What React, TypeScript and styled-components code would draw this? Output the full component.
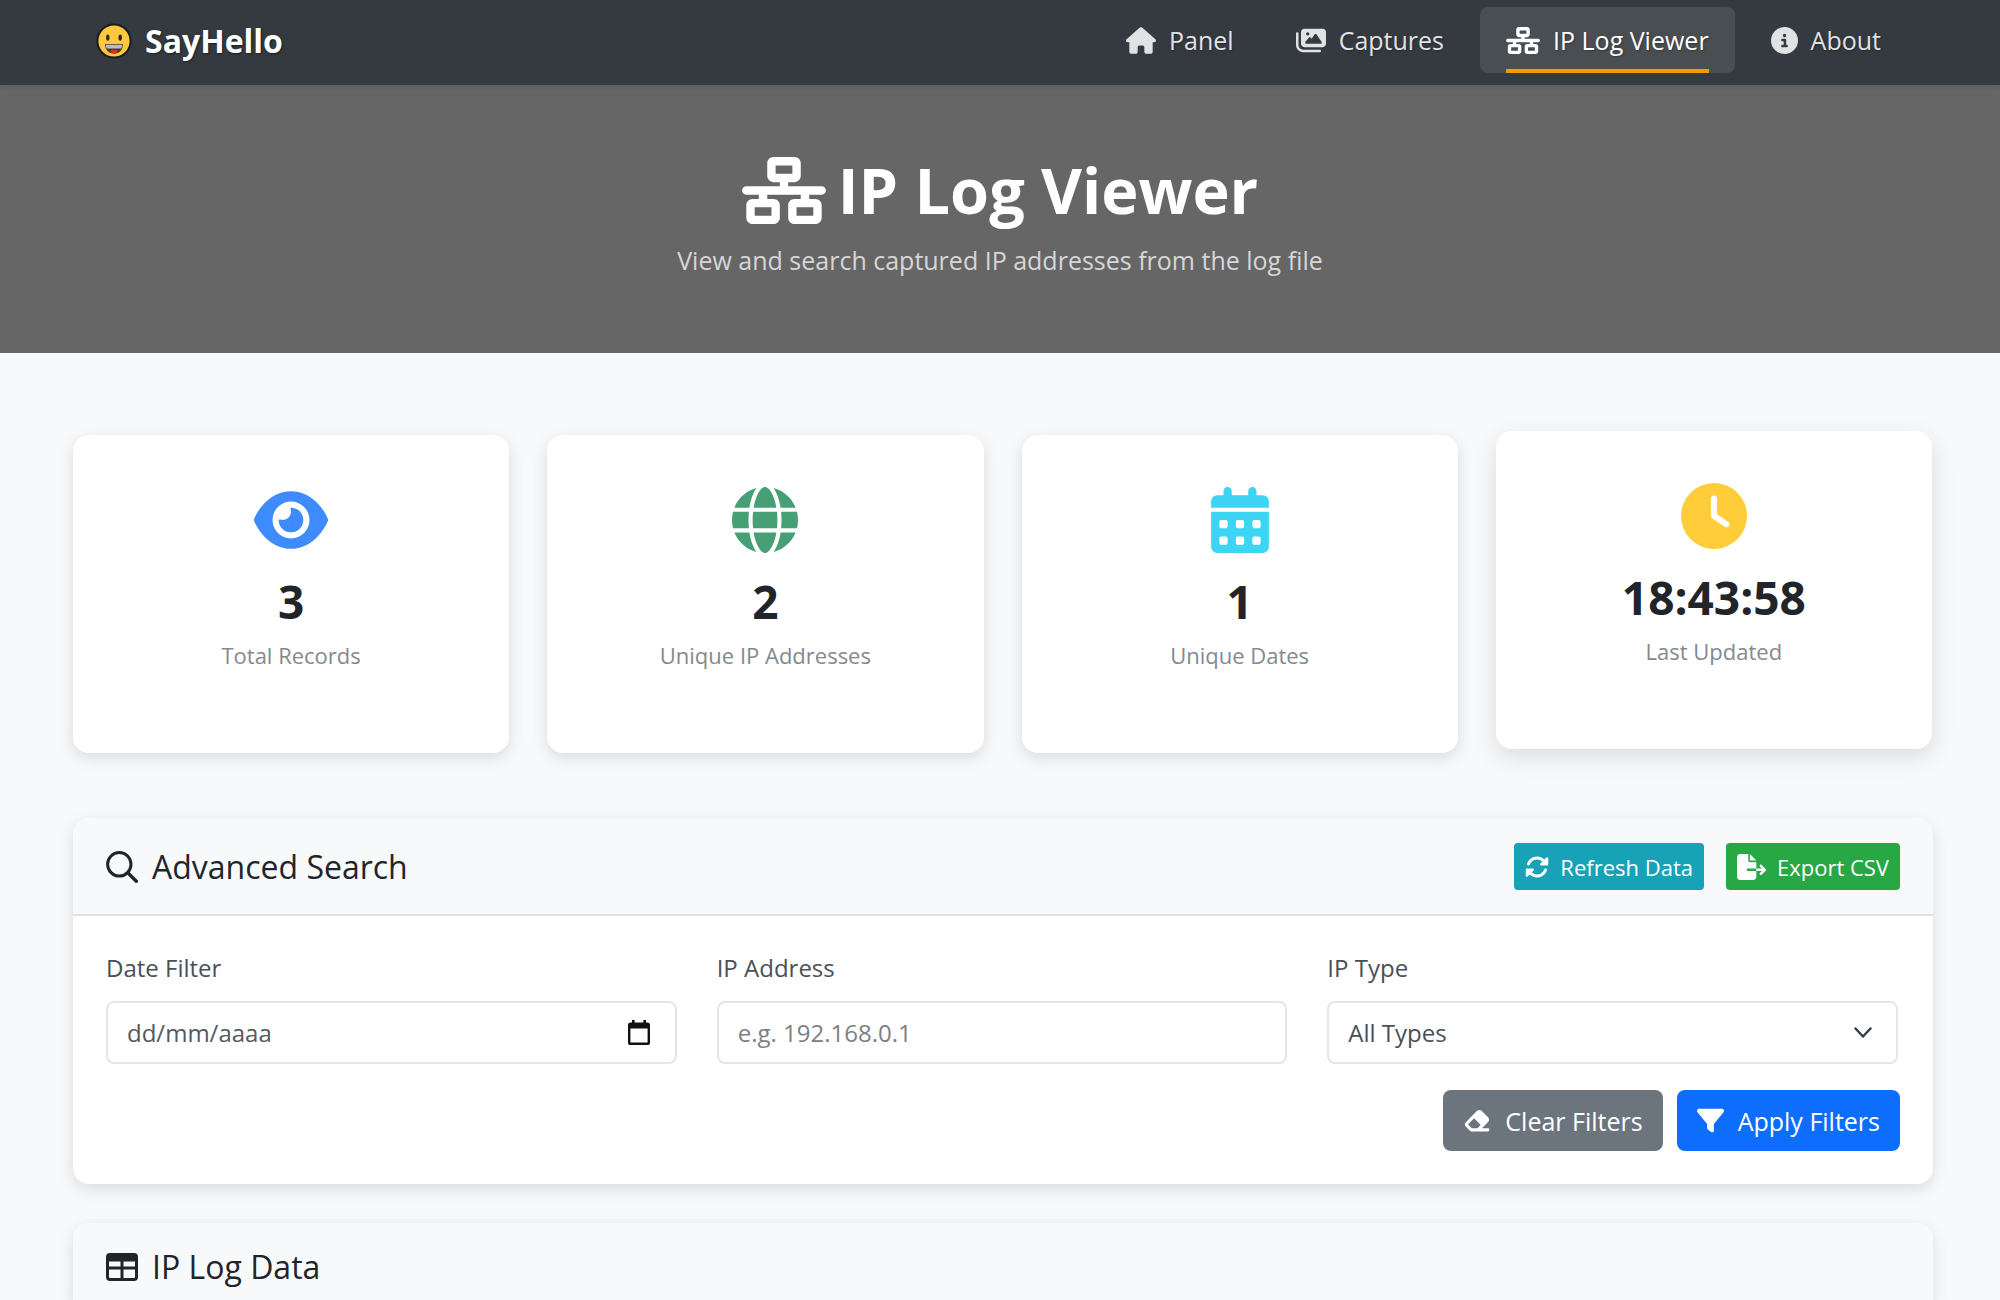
import React from "react";
import styled, { createGlobalStyle, css } from "styled-components";
import {
  FaHouse,
  FaImages,
  FaNetworkWired,
  FaCircleInfo,
  FaEye,
  FaGlobe,
  FaCalendarDays,
  FaClock,
  FaRotate,
  FaFileExport,
  FaEraser,
  FaFilter,
} from "react-icons/fa6";

const GlobalStyle = createGlobalStyle`
  *, *::before, *::after { box-sizing: border-box; }
  body {
    margin: 0;
    background: #f8f9fb;
    color: #212529;
    font-family: "Open Sans", "Noto Sans", sans-serif;
    font-size: 24px;
    line-height: 36px;
  }
  h1, h2, p { margin: 0; }
  button, input, select { font: inherit; color: inherit; }
  svg { display: block; flex: none; }
`;

const Page = styled.div`
  height: 100vh;
  overflow: hidden;
`;

const Icon = styled.span<{ $width: number; $height: number; $color?: string }>`
  flex: none;
  color: ${(p) => p.$color ?? "inherit"};

  svg {
    width: ${(p) => p.$width}px;
    height: ${(p) => p.$height}px;
  }
`;

const Navbar = styled.header`
  position: relative;
  display: flex;
  align-items: flex-start;
  justify-content: space-between;
  height: 85px;
  padding: 7px 93px 0 96px;
  background: #343a40;
  box-shadow: 0 2px 4px rgba(0, 0, 0, 0.1);
`;

const Brand = styled.a`
  display: flex;
  align-items: center;
  gap: 13px;
  height: 68px;
  color: #fff;
  font-size: 32px;
  font-weight: 700;
  text-decoration: none;
  text-shadow: 1px 1px 2px rgba(0, 0, 0, 0.5);
`;

const NavList = styled.nav`
  display: flex;
  gap: 10px;
`;

const NavItem = styled.a<{ $active?: boolean }>`
  position: relative;
  display: flex;
  align-items: center;
  gap: 13px;
  height: 66px;
  padding: 0 26px;
  border-radius: 8px;
  color: #e1e2e3;
  font-size: 25px;
  font-weight: 500;
  text-decoration: none;
  text-shadow: 1px 1px 2px rgba(0, 0, 0, 0.3);

  ${(p) =>
    p.$active &&
    css`
      background: #494e52;
      color: #fff;

      &::after {
        content: "";
        position: absolute;
        right: 26px;
        bottom: 0;
        left: 26px;
        height: 4px;
        background: #ff9800;
      }
    `}
`;

const Hero = styled.section`
  padding: 65px 24px 72px;
  background: #666;
  text-align: center;
`;

const HeroTitle = styled.h1`
  display: flex;
  align-items: center;
  justify-content: center;
  gap: 12px;
  color: #fff;
  font-size: 63px;
  font-weight: 700;
  line-height: 80px;
`;

const HeroText = styled.p`
  padding-top: 9px;
  color: #d6d6d6;
  font-size: 25px;
  font-weight: 500;
  line-height: 42px;
`;

const Content = styled.main`
  display: flex;
  flex-direction: column;
  padding: 82px 67px 0 73px;
`;

const Stats = styled.section`
  display: grid;
  grid-template-columns: repeat(4, minmax(0, 1fr));
  gap: 38px;
  margin-bottom: 65px;
  padding-right: 1px;
`;

const StatCard = styled.article<{ $raised?: boolean }>`
  display: flex;
  flex-direction: column;
  align-items: center;
  padding: 52px 24px 78px;
  border-radius: 16px;
  background: #fff;
  box-shadow: ${(p) =>
    p.$raised ? "0 8px 24px rgba(0, 0, 0, 0.12)" : "0 5px 16px rgba(0, 0, 0, 0.12)"};
  transform: ${(p) => (p.$raised ? "translateY(-4px)" : "none")};
`;

const StatValue = styled.div`
  margin-top: 18px;
  font-size: 46px;
  font-weight: 700;
  line-height: 60px;
`;

const StatLabel = styled.div`
  margin-top: 4px;
  color: #85898d;
  font-size: 22px;
  line-height: 40px;
`;

const Panel = styled.section`
  margin-bottom: 39px;
  border-radius: 16px;
  background: #fff;
  box-shadow: 0 5px 16px rgba(0, 0, 0, 0.12);
`;

const PanelHeader = styled.div`
  display: flex;
  align-items: center;
  justify-content: space-between;
  padding: 25px 33px 24px;
  border-bottom: 2px solid #dfe2e4;
  border-radius: 16px 16px 0 0;
  background: #f8f9fb;
`;

const PanelTitle = styled.h2`
  display: flex;
  align-items: center;
  gap: 14px;
  font-size: 32px;
  font-weight: 500;
  line-height: 38px;
`;

const Actions = styled.div<{ $gap: number }>`
  display: flex;
  justify-content: flex-end;
  gap: ${(p) => p.$gap}px;
`;

const Button = styled.button<{ $color: string; $small?: boolean }>`
  display: flex;
  align-items: center;
  gap: ${(p) => (p.$small ? 11 : 14)}px;
  height: ${(p) => (p.$small ? 47 : 61)}px;
  padding: 0 ${(p) => (p.$small ? 11 : 20)}px;
  border: 0;
  border-radius: ${(p) => (p.$small ? 4 : 8)}px;
  background: ${(p) => p.$color};
  color: #fff;
  font-size: ${(p) => (p.$small ? 22 : 25)}px;
  font-weight: 500;
  white-space: nowrap;
`;

const SearchForm = styled.form`
  padding: 31px 33px 33px;
`;

const Fields = styled.div`
  display: grid;
  grid-template-columns: repeat(3, minmax(0, 1fr));
  gap: 40px;
  margin-bottom: 26px;
  padding-right: 2px;
`;

const Field = styled.div`
  display: flex;
  flex-direction: column;
  gap: 13px;
`;

const Label = styled.label`
  color: #495057;
  font-size: 24px;
  line-height: 41px;
`;

const Control = styled.div`
  display: flex;
  align-items: center;
  height: 63px;
  padding-right: 24px;
  border: 2px solid #e3e6e9;
  border-radius: 8px;
  background: #fff;
  color: #495057;
`;

const controlStyle = css`
  flex: 1;
  min-width: 0;
  height: 59px;
  padding: 0 0 0 19px;
  border: 0;
  outline: 0;
  background: transparent;
`;

const TextInput = styled.input<{ $dark?: boolean }>`
  ${controlStyle}
  &::placeholder {
    color: ${(p) => (p.$dark ? "#55595e" : "#7c8085")};
    opacity: 1;
  }
`;

const Select = styled.select`
  ${controlStyle}
  margin-right: -18px;
  padding-right: 18px;
  appearance: none;
`;

const PickerButton = styled.button`
  padding: 0;
  border: 0;
  background: none;
  color: #111;
`;

const SmileyIcon = () => (
  <svg width="36" height="36" viewBox="0 0 36 36" aria-hidden="true">
    <circle cx="18" cy="18" r="16.6" fill="#ffc83d" stroke="#1b1c1e" strokeWidth="2" />
    <ellipse cx="11.8" cy="14.6" rx="1.7" ry="3.2" fill="#2b2722" />
    <ellipse cx="24.2" cy="14.6" rx="1.7" ry="3.2" fill="#2b2722" />
    <path d="M9 21h18c0 5.800-3.600 9.800-9 9.800S9 26.800 9 21z" fill="#4a3b2c" />
    <path d="M9.800 21.800h16.400c0 1.400-.3 2.600-.9 3.700H10.700c-.6-1.100-.9-2.300-.9-3.700z" fill="#b9bcc0" />
    <path d="M14 29.200c1-1.900 2.400-2.500 4-2.500s3 .6 4 2.500c-1.200.7-2.500 1.100-4 1.100s-2.800-.4-4-1.100z" fill="#d3341c" />
  </svg>
);

const SearchIcon = () => (
  <svg width="32" height="32" viewBox="0 0 32 32" fill="none" stroke="currentColor" aria-hidden="true">
    <circle cx="13.3" cy="13.3" r="11.7" strokeWidth="3" />
    <path d="M21.800 21.800 30.300 30.300" strokeWidth="3.4" strokeLinecap="round" />
  </svg>
);

const TableIcon = () => (
  <svg width="32" height="28" viewBox="0 0 32 28" aria-hidden="true">
    <path
      d="M4 0h24a4 4 0 0 1 4 4v20a4 4 0 0 1-4 4H4a4 4 0 0 1-4-4V4a4 4 0 0 1 4-4zM3 8.500v5h11.500v-5zM17.500 8.500v5H29v-5zM3 16.500V24a1 1 0 0 0 1 1h10.500v-8.500zM17.500 16.500V25H28a1 1 0 0 0 1-1v-7.500z"
      fill="currentColor"
      fillRule="evenodd"
    />
  </svg>
);

const CalendarIcon = () => (
  <svg width="24" height="26" viewBox="0 0 24 26" aria-hidden="true">
    <path
      d="M5 0h2.600v2.600h8.800V0H19v2.600h1.400A2.600 2.600 0 0 1 23 5.200v17.200a2.600 2.600 0 0 1-2.600 2.600H3.600A2.600 2.600 0 0 1 1 22.400V5.200a2.600 2.600 0 0 1 2.600-2.600H5zM3.400 8.600v14h17.200v-14z"
      fill="currentColor"
      fillRule="evenodd"
    />
  </svg>
);

const ChevronIcon = () => (
  <svg width="18" height="12" viewBox="0 0 18 12" fill="none" aria-hidden="true">
    <path d="M1.500 1.500 9 9.500l7.500-8" stroke="#343a40" strokeWidth="2.4" strokeLinecap="round" strokeLinejoin="round" />
  </svg>
);

const navItems = [
  { label: "Panel", icon: <FaHouse />, width: 30 },
  { label: "Captures", icon: <FaImages />, width: 30 },
  { label: "IP Log Viewer", icon: <FaNetworkWired />, width: 34, active: true },
  { label: "About", icon: <FaCircleInfo />, width: 27 },
];

const stats = [
  { value: "3", label: "Total Records", color: "#3d8bfd", icon: <FaEye />, width: 74 },
  { value: "2", label: "Unique IP Addresses", color: "#479f76", icon: <FaGlobe />, width: 66 },
  { value: "1", label: "Unique Dates", color: "#3dd5f3", icon: <FaCalendarDays />, width: 58 },
  { value: "18:43:58", label: "Last Updated", color: "#ffcd39", icon: <FaClock />, width: 66, raised: true },
];

export default function App() {
  return (
    <Page>
      <GlobalStyle />
      <Navbar>
        <Brand href="#">
          <SmileyIcon />
          SayHello
        </Brand>
        <NavList>
          {navItems.map((item) => (
            <NavItem key={item.label} href="#" $active={item.active}>
              <Icon $width={item.width} $height={27}>
                {item.icon}
              </Icon>
              {item.label}
            </NavItem>
          ))}
        </NavList>
      </Navbar>

      <Hero>
        <HeroTitle>
          <Icon $width={84} $height={67}>
            <FaNetworkWired />
          </Icon>
          IP Log Viewer
        </HeroTitle>
        <HeroText>View and search captured IP addresses from the log file</HeroText>
      </Hero>

      <Content>
        <Stats>
          {stats.map((stat) => (
            <StatCard key={stat.label} $raised={stat.raised}>
              <Icon $width={stat.width} $height={66} $color={stat.color}>
                {stat.icon}
              </Icon>
              <StatValue>{stat.value}</StatValue>
              <StatLabel>{stat.label}</StatLabel>
            </StatCard>
          ))}
        </Stats>

        <Panel>
          <PanelHeader>
            <PanelTitle>
              <SearchIcon />
              Advanced Search
            </PanelTitle>
            <Actions $gap={22}>
              <Button type="button" $small $color="#17a2b8">
                <Icon $width={24} $height={24}>
                  <FaRotate />
                </Icon>
                Refresh Data
              </Button>
              <Button type="button" $small $color="#28a745">
                <Icon $width={29} $height={26}>
                  <FaFileExport />
                </Icon>
                Export CSV
              </Button>
            </Actions>
          </PanelHeader>
          <SearchForm onSubmit={(e) => e.preventDefault()}>
            <Fields>
              <Field>
                <Label htmlFor="date">Date Filter</Label>
                <Control>
                  <TextInput id="date" type="text" placeholder="dd/mm/aaaa" $dark />
                  <PickerButton type="button" aria-label="Open calendar">
                    <CalendarIcon />
                  </PickerButton>
                </Control>
              </Field>
              <Field>
                <Label htmlFor="ip">IP Address</Label>
                <Control>
                  <TextInput id="ip" type="text" placeholder="e.g. 192.168.0.1" />
                </Control>
              </Field>
              <Field>
                <Label htmlFor="type">IP Type</Label>
                <Control>
                  <Select id="type" defaultValue="all">
                    <option value="all">All Types</option>
                    <option value="v4">IPv4</option>
                    <option value="v6">IPv6</option>
                  </Select>
                  <ChevronIcon />
                </Control>
              </Field>
            </Fields>
            <Actions $gap={14}>
              <Button type="reset" $color="#6c757d">
                <Icon $width={28} $height={25}>
                  <FaEraser />
                </Icon>
                Clear Filters
              </Button>
              <Button type="submit" $color="#0d6efd">
                <Icon $width={27} $height={27}>
                  <FaFilter />
                </Icon>
                Apply Filters
              </Button>
            </Actions>
          </SearchForm>
        </Panel>

        <Panel>
          <PanelHeader>
            <PanelTitle>
              <TableIcon />
              IP Log Data
            </PanelTitle>
          </PanelHeader>
        </Panel>
      </Content>
    </Page>
  );
}
